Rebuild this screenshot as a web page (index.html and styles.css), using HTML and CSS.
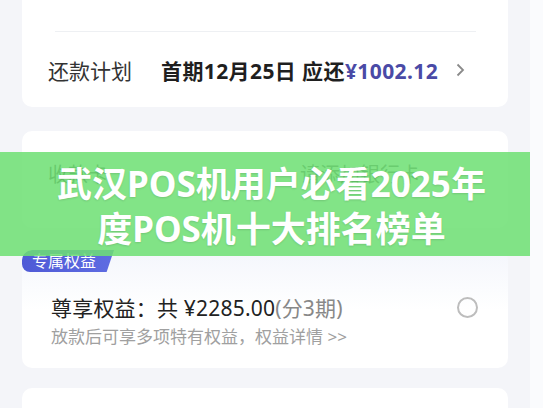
FILE: index.html
```html
<!DOCTYPE html>
<html lang="zh-CN">
<head>
  <meta charset="UTF-8">
  <title>武汉POS机用户必看2025年度POS机十大排名榜单</title>
  <meta name="viewport" content="width=device-width, initial-scale=1">
  <link rel="stylesheet" href="styles.css">
</head>
<body>
  <div class="page">

    <div class="card card-plan">
      <div class="row row-faded">
        <span>借款期限</span>
        <span>12个月</span>
      </div>
      <div class="divider"></div>
      <div class="row row-plan">
        <span class="label">还款计划</span>
        <span class="plan">首期12月25日 应还<span class="amount">¥1002.12</span></span>
        <span class="chevron">
          <svg width="10" height="14" viewBox="0 0 10 14"><path d="M2.5 1.5 L8 7 L2.5 12.5" fill="none" stroke="#8a8a8a" stroke-width="1.8"/></svg>
        </span>
      </div>
    </div>

    <div class="card card-bank">
      <span class="label">收款卡</span>
      <span class="bank-add">请添加银行卡</span>
    </div>

    <div class="card card-perk">
      <div class="badge">专属权益</div>
      <div class="perk-body">
        <div class="perk-text">
          <div class="perk-title">尊享权益：共 ¥2285.00<span class="muted">(分3期)</span></div>
          <div class="perk-sub">放款后可享多项特有权益，权益详情 &gt;&gt;</div>
        </div>
        <span class="radio"></span>
      </div>
    </div>

    <div class="card card-next"></div>

    <div class="banner">
      <h1>武汉POS机用户必看2025年度POS机十大排名榜单</h1>
    </div>
  </div>
</body>
</html>
```

FILE: styles.css
```css
body {
  margin: 0;
  background: #fafbfd;
  font-family: "Noto Sans", "Noto Sans CJK SC", sans-serif;
  color: #222;
  overflow: hidden;
}
.page {
  position: relative;
  width: 530px;
  height: 408px;
  background: #f4f5f9;
  overflow: hidden;
}
.card {
  width: 486px;
  margin-left: 22px;
  background: #fff;
  border-radius: 10px;
  box-sizing: border-box;
}
.card-plan {
  margin-top: -30px;
}
.row {
  display: flex;
  align-items: center;
}
.row-faded {
  height: 61px;
  padding: 0 40px 0 30px;
  align-items: flex-start;
  justify-content: space-between;
  font-size: 20px;
  line-height: 28px;
  color: #d4d4d4;
}
.divider {
  height: 1px;
  margin: 0 32px 0 33px;
  background: #eef0f3;
}
.row-plan {
  height: 75px;
  padding-left: 26px;
  font-size: 21px;
}
.row-plan .label {
  width: 113px;
  color: #333;
}
.plan {
  font-weight: 700;
  color: #1f1f1f;
  letter-spacing: 0.4px;
}
.amount {
  color: #4a4aa6;
}
.chevron {
  display: flex;
  margin-left: 17px;
}
.card-bank {
  margin-top: 24px;
  height: 97px;
  display: flex;
  justify-content: space-between;
  padding: 28px 88px 0 26px;
  font-size: 20px;
  color: #444;
}
.bank-add {
  color: #555;
}
.card-perk {
  margin-top: 22px;
  height: 118px;
  background: linear-gradient(to bottom, #f4f6fc 0, #fbfcfe 40px, #fff 60px);
  overflow: hidden;
}
.badge {
  width: 92px;
  height: 22px;
  padding-left: 10px;
  box-sizing: border-box;
  background: linear-gradient(to right, #4f5ad6, #5e6ce2);
  color: #fff;
  font-size: 16px;
  line-height: 22px;
  border-radius: 10px 0 0 8px;
  clip-path: polygon(0 0, 100% 0, 92% 100%, 0 100%);
}
.perk-body {
  display: flex;
  align-items: flex-start;
  justify-content: space-between;
  padding: 22px 30px 0 29px;
}
.perk-title {
  font-size: 21px;
  line-height: 28px;
  color: #222;
  letter-spacing: 0.2px;
}
.muted {
  color: #888;
}
.perk-sub {
  margin-top: 2px;
  font-size: 17px;
  line-height: 26px;
  color: #a0a0a0;
}
.radio {
  width: 17px;
  height: 17px;
  margin-top: 3px;
  border: 2px solid #bdbdbd;
  border-radius: 50%;
}
.card-next {
  margin-top: 20px;
  height: 60px;
}
.banner {
  position: absolute;
  top: 152px;
  left: 0;
  width: 543px;
  height: 104px;
  padding-top: 9px;
  box-sizing: border-box;
  background: rgba(110, 223, 115, 0.86);
}
.banner h1 {
  width: 450px;
  margin: 0 auto;
  text-align: center;
  font-family: "Noto Sans", "Noto Sans CJK SC", sans-serif;
  font-size: 35px;
  line-height: 45px;
  font-weight: 700;
  color: #fff;
  text-shadow: 0 1px 2px rgba(0, 0, 0, 0.12);
}
```
